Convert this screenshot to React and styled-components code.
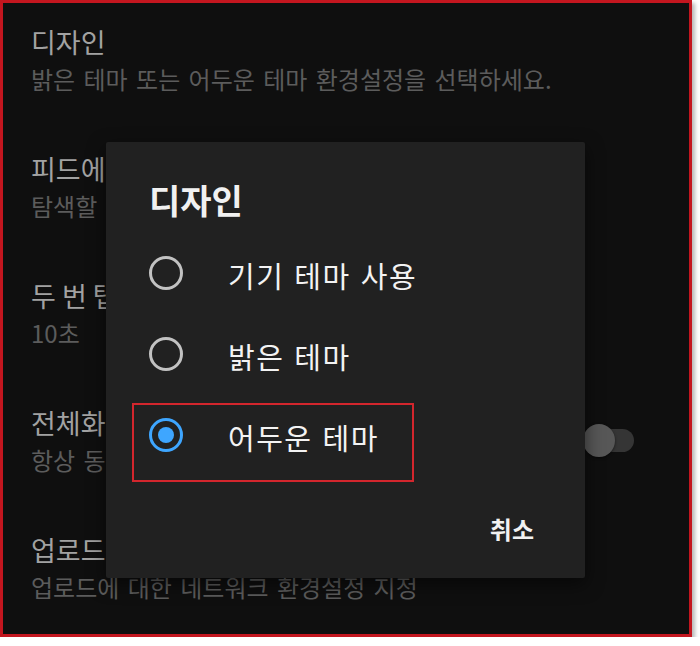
import React from 'react'
import styled, { createGlobalStyle, css } from 'styled-components'

const GlobalStyle = createGlobalStyle`
  html, body {
    margin: 0;
    padding: 0;
    background: #ffffff;
  }
  * {
    box-sizing: border-box;
  }
`

const Frame = styled.div`
  position: relative;
  width: 692px;
  height: 637px;
  border: 3px solid #c3161f;
  box-shadow: 3px 3px 4px rgba(0, 0, 0, 0.28);
  background: #0f0f0f;
  overflow: hidden;
  font-family: 'Noto Sans CJK KR', 'Noto Sans', sans-serif;
`

const SettingsList = styled.div`
  display: flex;
  flex-direction: column;
  padding: 23px 55px 0 28px;
`

const Row = styled.div`
  display: flex;
  align-items: flex-start;
  justify-content: space-between;
  height: 127px;
`

const TextBlock = styled.div`
  display: flex;
  flex-direction: column;
  gap: 7px;
`

const RowTitle = styled.div`
  font-size: 27px;
  line-height: 32px;
  color: #a2a2a2;
  white-space: nowrap;
`

const RowSubtitle = styled.div`
  font-size: 24px;
  line-height: 28px;
  color: #5c5c5c;
  word-spacing: 3px;
  white-space: nowrap;
`

const Toggle = styled.div`
  position: relative;
  width: 51px;
  height: 33px;
  margin-top: 17px;
  flex-shrink: 0;
`

const Track = styled.div`
  position: absolute;
  right: 0;
  top: 5px;
  width: 42px;
  height: 23px;
  border-radius: 12px;
  background: #353535;
`

const Thumb = styled.div`
  position: absolute;
  left: 0;
  top: 0;
  width: 32px;
  height: 33px;
  border-radius: 50%;
  background: #575757;
  box-shadow: 0 1px 3px rgba(0, 0, 0, 0.5);
`

const Dialog = styled.div`
  position: absolute;
  left: 103px;
  top: 139px;
  width: 479px;
  height: 436px;
  background: #212121;
  border-radius: 2px;
  box-shadow: 0 6px 18px rgba(0, 0, 0, 0.55);
  display: flex;
  flex-direction: column;
`

const DialogTitle = styled.h2`
  margin: 0;
  padding: 38px 43px 0;
  font-size: 34px;
  line-height: 40px;
  font-weight: 700;
  color: #f1f1f1;
`

const Options = styled.div`
  display: flex;
  flex-direction: column;
  margin-top: 12px;
`

const Option = styled.div`
  position: relative;
  display: flex;
  align-items: center;
  gap: 45px;
  height: 81px;
  padding-left: 43px;

  ${(p) =>
    p.highlighted &&
    css`
      &::after {
        content: '';
        position: absolute;
        left: 26px;
        top: 9px;
        width: 278px;
        height: 75px;
        border: 2px solid #d3262d;
      }
    `}
`

const Radio = styled.span`
  position: relative;
  display: block;
  width: 34px;
  height: 34px;
  border-radius: 50%;
  border: 3px solid ${(p) => (p.checked ? '#3ea6ff' : '#c2c2c2')};
  flex-shrink: 0;

  ${(p) =>
    p.checked &&
    css`
      &::after {
        content: '';
        position: absolute;
        left: 6px;
        top: 6px;
        width: 16px;
        height: 16px;
        border-radius: 50%;
        background: #3ea6ff;
      }
    `}
`

const OptionLabel = styled.span`
  font-size: 29px;
  line-height: 36px;
  color: #f3f3f3;
  letter-spacing: 1.5px;
  word-spacing: 2px;
  margin-top: 4px;
`

const Footer = styled.div`
  flex: 1;
  display: flex;
  align-items: center;
  justify-content: flex-end;
  padding: 4px 51px 0 0;
`

const CancelButton = styled.button`
  background: none;
  border: none;
  padding: 0;
  font-family: inherit;
  font-size: 24px;
  font-weight: 700;
  line-height: 28px;
  color: #f1f1f1;
`

const settings = [
  { title: '디자인', sub: '밝은 테마 또는 어두운 테마 환경설정을 선택하세요.' },
  { title: '피드에서 음소거 재생', sub: '탐색할 때 동영상을 음소거 상태로 재생' },
  { title: '두 번 탭하여 탐색', sub: '10초' },
  { title: '전체화면 확대/축소', sub: '항상 동영상을 확대하여 화면 채우기', toggle: true },
  { title: '업로드', sub: '업로드에 대한 네트워크 환경설정 지정' },
]

const themes = ['기기 테마 사용', '밝은 테마', '어두운 테마']

export default function App() {
  const selected = 2

  function renderSetting(item, index) {
    return (
      <Row key={index}>
        <TextBlock>
          <RowTitle>{item.title}</RowTitle>
          <RowSubtitle>{item.sub}</RowSubtitle>
        </TextBlock>
        {item.toggle && (
          <Toggle>
            <Track />
            <Thumb />
          </Toggle>
        )}
      </Row>
    )
  }

  return (
    <>
      <GlobalStyle />
      <Frame>
        <SettingsList>{settings.map(renderSetting)}</SettingsList>
        <Dialog>
          <DialogTitle>디자인</DialogTitle>
          <Options>
            {themes.map((label, i) => (
              <Option key={label} highlighted={i === selected}>
                <Radio checked={i === selected} />
                <OptionLabel>{label}</OptionLabel>
              </Option>
            ))}
          </Options>
          <Footer>
            <CancelButton>취소</CancelButton>
          </Footer>
        </Dialog>
      </Frame>
    </>
  )
}
